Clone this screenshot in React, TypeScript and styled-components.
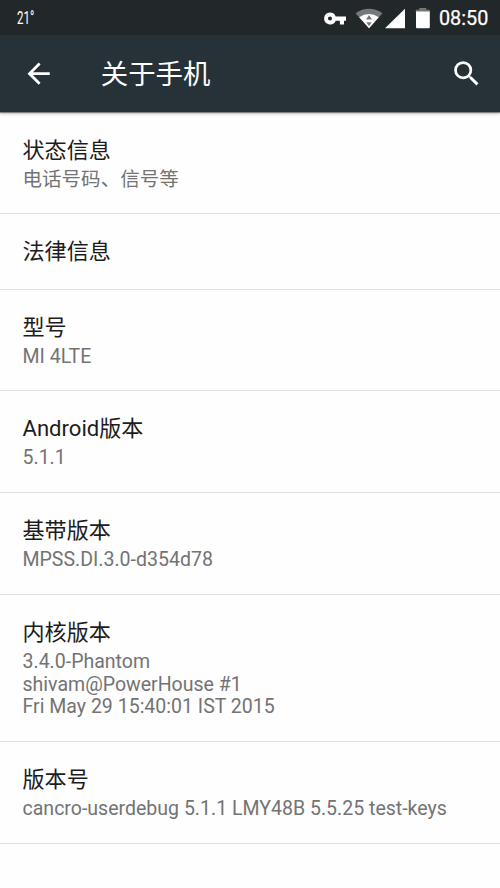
import React from "react";
import styled, { createGlobalStyle } from "styled-components";

const GlobalStyle = createGlobalStyle`
  html, body { margin: 0; background: #fefefe; }
  * { box-sizing: border-box; }
  svg { display: block; flex: none; }
`;

const Screen = styled.main`
  width: 500px;
  height: 888px;
  overflow: hidden;
  background: #fefefe;
  font-family: Roboto, "Noto Sans CJK SC", sans-serif;
`;

const StatusBar = styled.div`
  display: flex;
  align-items: center;
  height: 35px;
  padding: 0 11px 0 17px;
  background: #22272a;
  color: #fff;
`;

const Temperature = styled.span`
  font-size: 18px;
  line-height: 20px;
  padding-top: 1px;
  transform: scaleX(0.64);
  transform-origin: left center;
`;

const StatusIcons = styled.div`
  display: flex;
  margin-left: auto;
`;

const Clock = styled.time`
  width: 50px;
  margin-left: 8px;
  font-size: 19.8px;
  font-weight: 400;
  -webkit-text-stroke: 0.25px #fff;
  line-height: 35px;
  padding-top: 1px;
  white-space: nowrap;
`;

const AppBar = styled.header`
  display: flex;
  align-items: center;
  height: 77px;
  padding: 0 17px 0 22px;
  background: #263238;
  color: #fff;
  box-shadow: 0 1px 1px rgba(38, 50, 56, 0.5), 0 2px 3px rgba(0, 0, 0, 0.2);
`;

const IconButton = styled.button`
  padding: 0;
  border: 0;
  background: none;
  color: inherit;
`;

const PageTitle = styled.h1`
  flex: 1;
  margin: 0 0 0 45.5px;
  padding-top: 2px;
  font-size: 27.4px;
  font-weight: 400;
  line-height: 40px;
`;

const List = styled.div`
  padding-top: 1px;
`;

const Row = styled.section<{ $height: number }>`
  height: ${(p) => p.$height}px;
  padding: 24px 22.5px 0;
  border-bottom: 1px solid #e0e0e0;
`;

const RowTitle = styled.h2`
  margin: 0 0 6px;
  font-size: 22.1px;
  font-weight: 400;
  line-height: 26px;
  color: #1c1c1c;
`;

const RowDetail = styled.p`
  margin: 0;
  font-size: 19.54px;
  line-height: 22.7px;
  color: #737373;
  white-space: pre-line;
`;

const items = [
  { title: "状态信息", detail: "电话号码、信号等", height: 101 },
  { title: "法律信息", height: 76 },
  { title: "型号", detail: "MI 4LTE", height: 101 },
  { title: "Android版本", detail: "5.1.1", height: 102 },
  { title: "基带版本", detail: "MPSS.DI.3.0-d354d78", height: 102 },
  {
    title: "内核版本",
    detail: "3.4.0-Phantom\nshivam@PowerHouse #1\nFri May 29 15:40:01 IST 2015",
    height: 147,
  },
  { title: "版本号", detail: "cancro-userdebug 5.1.1 LMY48B 5.5.25 test-keys", height: 102 },
];

const StatusGlyphs = () => (
  <svg width="108" height="22" viewBox="323 6 108 22" fill="#fff">
    <path
      fillRule="evenodd"
      d="M330 11.5a6 6 0 0 1 5.7 4.1H346v4.2h-2v3.7h-4.1v-3.7h-4.2A6 6 0 1 1 330 11.5zm0 4a2 2 0 1 0 0 4.1 2 2 0 0 0 0-4.1z"
    />
    <path fill="#75797b" d="M355.5 12.2Q369 3.4 382.5 12.2L369 27.3z" />
    <path d="M359.2 16.2Q369 9.6 378.8 16.2L369 27.3z" />
    <path fill="#73777a" d="M369 14l3 4.600h-6zM366.300 21.300h5.400L369 25.300z" />
    <path d="M405 7.8v19.4h-20z" />
    <path fill="#73777a" d="M419.3 7h7v1.8h3.5v2.4h-14V8.8h3.5z" />
    <path d="M416 10.5h13.8v15.8a1 1 0 0 1-1 1H417a1 1 0 0 1-1-1z" />
  </svg>
);

export default function App() {
  return (
    <>
      <GlobalStyle />
      <Screen>
        <StatusBar>
          <Temperature>21°</Temperature>
          <StatusIcons>
            <StatusGlyphs />
          </StatusIcons>
          <Clock>08:50</Clock>
        </StatusBar>
        <AppBar>
          <IconButton aria-label="返回">
            <svg width="33.3" height="33.3" viewBox="0 0 24 24" fill="currentColor">
              <path d="M20 11H7.83l5.59-5.59L12 4l-8 8 8 8 1.41-1.41L7.83 13H20v-2z" />
            </svg>
          </IconButton>
          <PageTitle>关于手机</PageTitle>
          <IconButton aria-label="搜索">
            <svg width="33.3" height="33.3" viewBox="0 0 24 24" fill="currentColor">
              <path d="M15.5 14h-.79l-.28-.27A6.471 6.471 0 0 0 16 9.5 6.5 6.5 0 1 0 9.5 16c1.61 0 3.09-.59 4.23-1.57l.27.28v.79l5 4.99L20.49 19l-4.99-5zm-6 0C7.01 14 5 11.99 5 9.5S7.01 5 9.5 5 14 7.01 14 9.5 11.99 14 9.5 14z" />
            </svg>
          </IconButton>
        </AppBar>
        <List>
          {items.map((item) => (
            <Row key={item.title} $height={item.height}>
              <RowTitle>{item.title}</RowTitle>
              {item.detail && <RowDetail>{item.detail}</RowDetail>}
            </Row>
          ))}
        </List>
      </Screen>
    </>
  );
}
